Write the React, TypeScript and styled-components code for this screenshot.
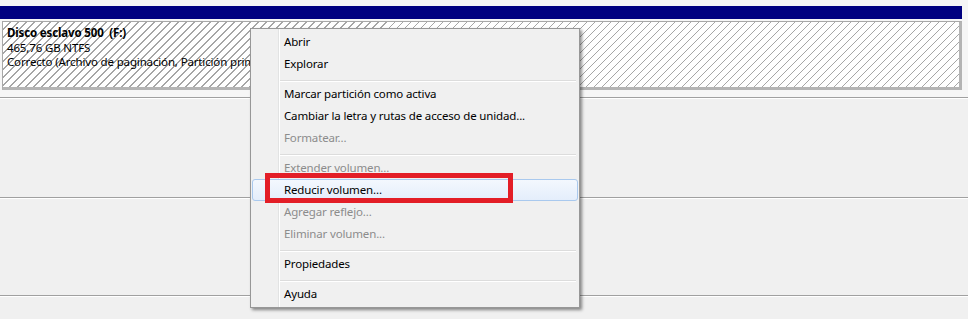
import styled, { createGlobalStyle } from "styled-components";

const GlobalStyle = createGlobalStyle`
    html, body {
        margin: 0;
        padding: 0;
        background: #f0f0f0;
    }
    body {
        font-family: "Noto Sans", "Liberation Sans", sans-serif;
        font-size: 11.5px;
        letter-spacing: -0.15px;
        color: #000;
    }
`;

const Screen = styled.div`
    position: relative;
    width: 968px;
    height: 319px;
    overflow: hidden;
    background: #f0f0f0;
`;

const DiskRow = styled.div`
    display: flex;
    flex-direction: column;
    height: 97px;
    padding-top: 6px;
    box-sizing: border-box;
    background: #f6f6f6;
`;

const VolumeBar = styled.div`
    height: 13px;
    margin-right: 6px;
    background: #000080;
`;

const PartitionBox = styled.div`
    height: 69px;
    margin: 2px 6px 0 2px;
    padding: 4px 4px 0;
    box-sizing: border-box;
    border-top: 1px solid #a8a8a8;
    border-left: 1px solid #a8a8a8;
    border-right: 3px solid #b4b4b4;
    border-bottom: 3px solid #b4b4b4;
    background: repeating-linear-gradient(
        135deg,
        #ffffff 0px,
        #ffffff 4.8px,
        #a6a6a6 4.8px,
        #a6a6a6 5.66px
    );
    line-height: 14.5px;
    white-space: nowrap;
    overflow: hidden;
`;

const PartitionLine = styled.div<{ $bold?: boolean }>`
    font-weight: ${(p) => (p.$bold ? 700 : 400)};
`;

const Divider = styled.div`
    height: 2px;
    background: linear-gradient(to bottom, #a0a0a0 0 1px, #ffffff 1px 2px);
`;

const EmptyRow = styled.div<{ $h: number }>`
    height: ${(p) => p.$h}px;
`;

const Menu = styled.div`
    position: absolute;
    left: 250px;
    top: 28px;
    width: 330px;
    box-sizing: border-box;
    padding: 2px 1px;
    border: 1px solid #979797;
    background: linear-gradient(
        to right,
        #f0f0f0 0 27px,
        #e2e3e3 27px 28px,
        #ffffff 28px 29px,
        #f0f0f0 29px
    );
    box-shadow: 2px 2px 3px rgba(0, 0, 0, 0.45);
`;

const Item = styled.div<{ $disabled?: boolean; $active?: boolean }>`
    height: 22px;
    line-height: 20px;
    padding-left: 31px;
    box-sizing: border-box;
    white-space: nowrap;
    color: ${(p) => (p.$disabled ? "#8c8c8c" : "#000")};
    border: 1px solid ${(p) => (p.$active ? "#a9c9ee" : "transparent")};
    border-radius: 3px;
    background: ${(p) =>
        p.$active ? "linear-gradient(to bottom, #f3f8fe, #e4eefb)" : "transparent"};
`;

const Separator = styled.div`
    height: 8px;
    margin: 0 2px 0 28px;
    background: linear-gradient(
        to bottom,
        transparent 0 5px,
        #dcdcdc 5px 6px,
        #ffffff 6px 7px,
        transparent 7px
    );
`;

const Callout = styled.div`
    position: absolute;
    left: 265px;
    top: 173px;
    width: 248px;
    height: 30px;
    box-sizing: border-box;
    border: 5px solid #e31e27;
`;

type Entry = { label?: string; disabled?: boolean; active?: boolean; sep?: boolean };

const entries: Entry[] = [
    { label: "Abrir" },
    { label: "Explorar" },
    { sep: true },
    { label: "Marcar partición como activa" },
    { label: "Cambiar la letra y rutas de acceso de unidad..." },
    { label: "Formatear...", disabled: true },
    { sep: true },
    { label: "Extender volumen...", disabled: true },
    { label: "Reducir volumen...", active: true },
    { label: "Agregar reflejo...", disabled: true },
    { label: "Eliminar volumen...", disabled: true },
    { sep: true },
    { label: "Propiedades" },
    { sep: true },
    { label: "Ayuda" },
];

const App = () => {
    return (
        <Screen>
            <GlobalStyle />
            <DiskRow>
                <VolumeBar />
                <PartitionBox>
                    <PartitionLine $bold>Disco esclavo 500&nbsp; (F:)</PartitionLine>
                    <PartitionLine>465,76 GB NTFS</PartitionLine>
                    <PartitionLine>
                        Correcto (Archivo de paginación, Partición primaria)
                    </PartitionLine>
                </PartitionBox>
            </DiskRow>
            <Divider />
            <EmptyRow $h={98} />
            <Divider />
            <EmptyRow $h={96} />
            <Divider />
            <Menu>
                {entries.map((e, i) =>
                    e.sep ? (
                        <Separator key={i} />
                    ) : (
                        <Item key={i} $disabled={e.disabled} $active={e.active}>
                            {e.label}
                        </Item>
                    )
                )}
            </Menu>
            <Callout />
        </Screen>
    );
};

export default App;
